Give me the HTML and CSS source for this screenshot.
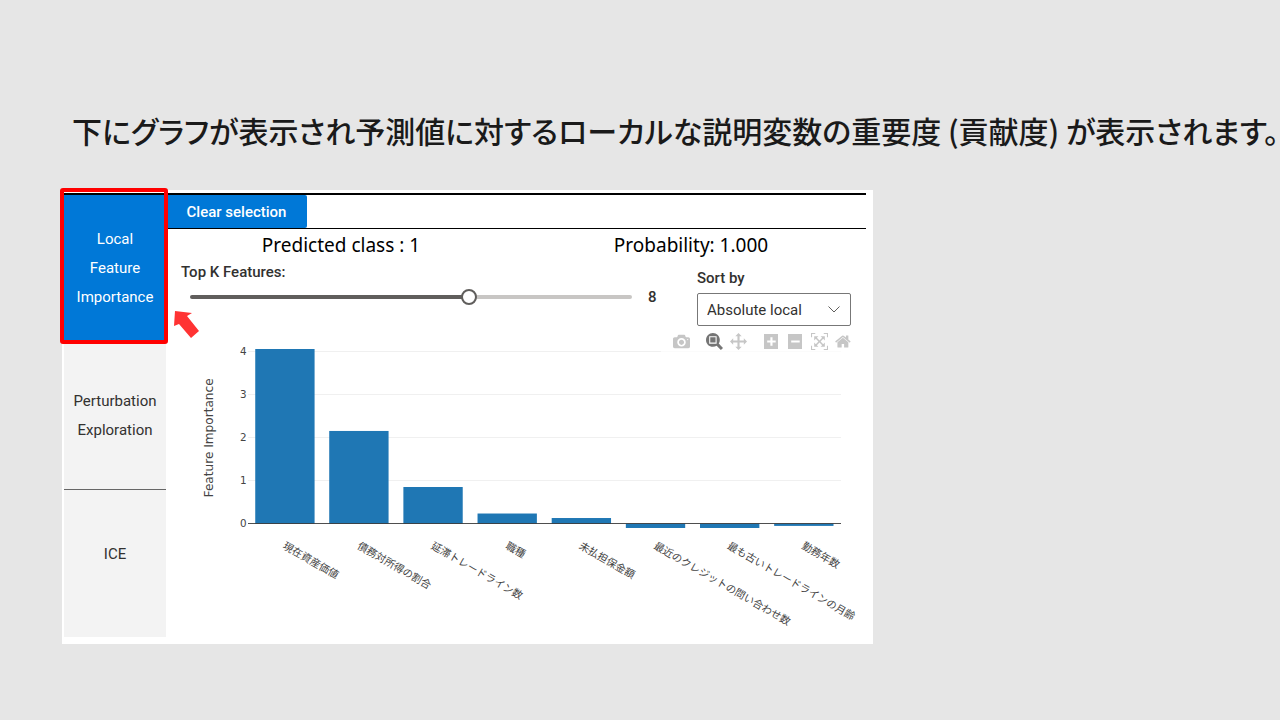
FILE: index.html
```html
<!DOCTYPE html>
<html lang="ja">
<head>
<meta charset="utf-8">
<meta name="viewport" content="width=device-width, initial-scale=1">
<title>Local Feature Importance</title>
<link rel="stylesheet" href="styles.css">
</head>
<body>
<main class="slide">
  <h1 class="headline">下にグラフが表示され予測値に対するローカルな説明変数の重要度 (貢献度) が表示されます。</h1>
  <section class="panel">
    <div class="workspace">
      <nav class="tabs">
        <button class="tab tab-active" type="button">Local<br>Feature<br>Importance</button>
        <button class="tab" type="button">Perturbation<br>Exploration</button>
        <button class="tab" type="button">ICE</button>
      </nav>
      <div class="content">
        <div class="toolbar"><button class="clear" type="button">Clear selection</button></div>
        <div class="stats"><span>Predicted class : 1</span><span>Probability: 1.000</span></div>
        <div class="controls">
          <div class="topk">
            <label class="label" for="topk">Top K Features:</label>
            <div class="slider-row">
              <input class="slider" id="topk" type="range" min="1" max="12" value="8">
              <output class="slider-value" for="topk">8</output>
            </div>
          </div>
          <div class="sort">
            <label class="label" for="sort">Sort by</label>
            <div class="select-box">
              <select class="select" id="sort"><option>Absolute local</option></select>
              <svg class="chevron" viewBox="0 0 12 7" aria-hidden="true"><path d="M0.5 0.5 6 6 11.5 0.5"/></svg>
            </div>
          </div>
        </div>
        <div class="chart">
          <svg class="plot" viewBox="0 0 808 358" role="img" aria-label="Feature Importance">
            <g class="grid">
              <path d="M95 28H779M95 78H779M95 127.5H779M95 177H779"/>
            </g>
            <g class="bars">
              <rect x="103" y="25.4" width="68.5" height="201.6"/>
              <rect x="188.4" y="120" width="68.5" height="107"/>
              <rect x="274" y="184.7" width="68.5" height="42.3"/>
              <rect x="359.6" y="215.3" width="68.5" height="11.7"/>
              <rect x="445.2" y="220.5" width="68.5" height="6.5"/>
              <rect x="530.8" y="227" width="68.5" height="5"/>
              <rect x="616.4" y="227" width="68.5" height="5"/>
              <rect x="702" y="227" width="68.5" height="2.6"/>
            </g>
            <path class="zero" d="M95 227H779"/>
            <g class="ticks">
              <text x="93" y="32">4</text>
              <text x="93" y="82">3</text>
              <text x="93" y="132">2</text>
              <text x="93" y="181">1</text>
              <text x="93" y="231">0</text>
            </g>
            <text class="axis-title" transform="translate(54 128) rotate(-90)">Feature Importance</text>
            <g class="names">
              <text transform="translate(134 255) rotate(30)">現在資産価値</text>
              <text transform="translate(220 255) rotate(30)">債務対所得の割合</text>
              <text transform="translate(305 255) rotate(30)">延滞トレードライン数</text>
              <text transform="translate(391 255) rotate(30)">職種</text>
              <text transform="translate(476 255) rotate(30)">未払担保金額</text>
              <text transform="translate(562 255) rotate(30)">最近のクレジットの問い合わせ数</text>
              <text transform="translate(647 255) rotate(30)">最も古いトレードラインの月齢</text>
              <text transform="translate(733 255) rotate(30)">勤務年数</text>
            </g>
          </svg>
          <div class="modebar">
            <div class="mode-group">
              <button class="mode" type="button" aria-label="Download plot"><svg viewBox="0 0 1000 1000"><path transform="matrix(1 0 0 -1 0 850)" d="m500 450c-83 0-150-67-150-150 0-83 67-150 150-150 83 0 150 67 150 150 0 83-67 150-150 150z m400 150h-120c-16 0-34 13-39 29l-31 93c-6 15-23 28-40 28h-340c-16 0-34-13-39-28l-31-94c-6-15-23-28-40-28h-120c-55 0-100-45-100-100v-450c0-55 45-100 100-100h800c55 0 100 45 100 100v450c0 55-45 100-100 100z m-400-550c-138 0-250 112-250 250 0 138 112 250 250 250 138 0 250-112 250-250 0-138-112-250-250-250z m365 380c-19 0-35 16-35 35 0 19 16 35 35 35 19 0 35-16 35-35 0-19-16-35-35-35z"/></svg></button>
            </div>
            <div class="mode-group">
              <button class="mode mode-on" type="button" aria-label="Zoom"><svg viewBox="0 0 1000 1000"><path transform="matrix(1 0 0 -1 0 850)" d="m1000-25l-250 251c40 63 63 138 63 218 0 224-182 406-407 406-224 0-406-182-406-406s183-406 407-406c80 0 155 22 218 62l250-250 125 125z m-812 250l0 438 437 0 0-438-437 0z m62 375l313 0 0-312-313 0 0 312z"/></svg></button>
              <button class="mode" type="button" aria-label="Pan"><svg viewBox="0 0 1000 1000"><path transform="matrix(1 0 0 -1 0 850)" d="m1000 350l-187 188 0-125-250 0 0 250 125 0-188 187-187-187 125 0 0-250-250 0 0 125-188-188 186-187 0 125 252 0 0-250-125 0 187-188 188 188-125 0 0 250 250 0 0-126 187 188z"/></svg></button>
            </div>
            <div class="mode-group">
              <button class="mode" type="button" aria-label="Zoom in"><svg viewBox="0 0 875 1000"><path transform="matrix(1 0 0 -1 0 850)" d="m1 787l0-875 875 0 0 875-875 0z m687-500l-187 0 0-187-125 0 0 187-188 0 0 125 188 0 0 187 125 0 0-187 187 0 0-125z"/></svg></button>
              <button class="mode" type="button" aria-label="Zoom out"><svg viewBox="0 0 875 1000"><path transform="matrix(1 0 0 -1 0 850)" d="m0 788l0-876 875 0 0 876-875 0z m688-500l-500 0 0 125 500 0 0-125z"/></svg></button>
              <button class="mode" type="button" aria-label="Autoscale"><svg viewBox="0 0 1000 1000"><path transform="matrix(1 0 0 -1 0 850)" d="m250 850l-187 0-63 0 0-62 0-188 63 0 0 188 187 0 0 62z m688 0l-188 0 0-62 188 0 0-188 62 0 0 188 0 62-62 0z m-875-938l0 188-63 0 0-188 0-62 63 0 187 0 0 62-187 0z m875 188l0-188-188 0 0-62 188 0 62 0 0 62 0 188-62 0z m-125 188l-1 0-93-94-156 156 156 156 92-93 2 0 0 250-250 0 0-2 93-92-156-156-156 156 94 92 0 2-250 0 0-250 0 0 93 93 157-156-157-156-93 94 0 0 0-250 250 0 0 0-94 93 156 157 156-157-93-93 0 0 250 0 0 250z"/></svg></button>
              <button class="mode" type="button" aria-label="Reset axes"><svg viewBox="0 0 928 1000"><path transform="matrix(1 0 0 -1 0 850)" d="m786 296v-267q0-15-11-26t-25-10h-214v214h-143v-214h-214q-15 0-25 10t-11 26v267q0 1 0 2t0 2l321 264 321-264q1-1 1-4z m124 39l-34-41q-5-5-12-6h-2q-7 0-12 3l-386 322-386-322q-7-4-13-4-7 2-12 7l-35 41q-4 5-3 13t6 12l401 334q18 15 42 15t43-15l136-114v109q0 8 5 13t13 5h107q8 0 13-5t5-13v-227l122-102q5-5 6-12t-4-13z"/></svg></button>
            </div>
          </div>
        </div>
      </div>
    </div>
    <div class="highlight"></div>
    <svg class="pointer" viewBox="0 0 26 28" aria-hidden="true"><path d="M1 0 18 2 13 5 25 20 17 27 5 13 0 15Z"/></svg>
  </section>
</main>
</body>
</html>
```
FILE: styles.css
```css
* {
  box-sizing: border-box;
}

body {
  margin: 0;
  background: #e6e6e6;
  color: #323130;
  font-family: Roboto, "Noto Sans CJK JP", sans-serif;
  font-size: 15px;
}

button,
select {
  margin: 0;
  font: inherit;
}

.slide {
  padding: 106px 0 0 62px;
}

.headline {
  margin: 0 0 36px 10px;
  color: #1a1a1a;
  font-family: "Noto Sans CJK JP", sans-serif;
  font-size: 30px;
  font-weight: 500;
  line-height: 48px;
  white-space: nowrap;
  font-feature-settings: "palt";
}

.panel {
  position: relative;
  max-width: 811px;
  padding: 3px 7px 7px 2px;
  background: #fff;
}

.workspace {
  display: grid;
  grid-template-columns: 102px 1fr;
  border-top: 2px solid #000;
}

.tabs {
  display: grid;
  grid-template-rows: repeat(3, 1fr);
}

.tab {
  padding: 0;
  border: 0;
  border-bottom: 1px solid #666;
  background: #f3f3f3;
  color: #323130;
  line-height: 29px;
}

.tab:last-child {
  padding-bottom: 18px;
  border-bottom: 0;
}

.tab-active {
  background: #0078d7;
  color: #fff;
}

.toolbar {
  display: flex;
  border-bottom: 1px solid #000;
}

.clear {
  width: 141px;
  height: 33px;
  padding: 0;
  border: 0;
  border-radius: 2px;
  background: #0078d7;
  color: #fff;
  font-weight: 500;
}

.stats {
  display: grid;
  grid-template-columns: 1fr 1fr;
  color: #000;
  font-family: "Noto Sans", sans-serif;
  font-size: 19px;
  line-height: 33px;
  text-align: center;
}

.controls {
  display: grid;
  grid-template-columns: 1fr 154px;
  gap: 30px;
  padding: 0 15px;
}

.label {
  display: block;
  font-weight: 500;
  line-height: 20px;
}

.slider-row {
  display: flex;
  align-items: center;
  height: 30px;
  padding-left: 9px;
}

.slider {
  flex: 1;
  min-width: 0;
  height: 16px;
  margin: 0;
  appearance: none;
  background: transparent;
}

.slider::-webkit-slider-runnable-track {
  height: 4px;
  border-radius: 2px;
  background: linear-gradient(to right, #605e5c 64%, #c8c6c4 64%);
}

.slider::-webkit-slider-thumb {
  width: 16px;
  height: 16px;
  margin-top: -6px;
  appearance: none;
  border: 2px solid #605e5c;
  border-radius: 50%;
  background: #fff;
}

.slider-value {
  width: 35px;
  padding-left: 16px;
  font-weight: 500;
}

.sort {
  display: grid;
  gap: 5px;
  padding: 6px 0 1px;
}

.select-box {
  position: relative;
}

.select {
  display: block;
  width: 100%;
  height: 33px;
  padding: 0 28px 0 9px;
  appearance: none;
  border: 1px solid #777;
  border-radius: 2px;
  background: #fff;
  color: #323130;
}

.chevron {
  position: absolute;
  top: 13px;
  right: 11px;
  width: 12px;
  height: 7px;
  fill: none;
  stroke: #605e5c;
  pointer-events: none;
}

.chart {
  position: relative;
}

.plot {
  display: block;
  width: 100%;
}

.grid {
  stroke: #eee;
  shape-rendering: crispEdges;
}

.bars {
  fill: #1f77b4;
}

.zero {
  stroke: #333;
  shape-rendering: crispEdges;
}

.ticks,
.names,
.axis-title {
  fill: #444;
  font-size: 12px;
}

.names {
  font-family: "Noto Sans CJK JP", sans-serif;
}

.ticks,
.axis-title {
  font-family: "DejaVu Sans", sans-serif;
}

.ticks {
  text-anchor: end;
}

.axis-title {
  font-size: 14px;
  text-anchor: middle;
}

.modebar {
  position: absolute;
  top: 6px;
  right: 11px;
  display: flex;
  gap: 9px;
  padding: 0 0 3px 8px;
  background: rgba(255, 255, 255, 0.7);
}

.mode-group {
  display: flex;
}

.mode {
  display: grid;
  place-items: center;
  width: 24px;
  height: 17px;
  padding: 0;
  border: 0;
  background: transparent;
}

.mode svg {
  display: block;
  height: 17px;
  fill: #c6c6c6;
}

.mode-on svg {
  fill: #757575;
}

.highlight {
  position: absolute;
  top: -2px;
  left: -2px;
  width: 108px;
  height: 156px;
  border: 4px solid #f00;
  border-radius: 3px;
  pointer-events: none;
}

.pointer {
  position: absolute;
  top: 121px;
  left: 112px;
  width: 26px;
  height: 28px;
  fill: #f33;
  pointer-events: none;
}
```
